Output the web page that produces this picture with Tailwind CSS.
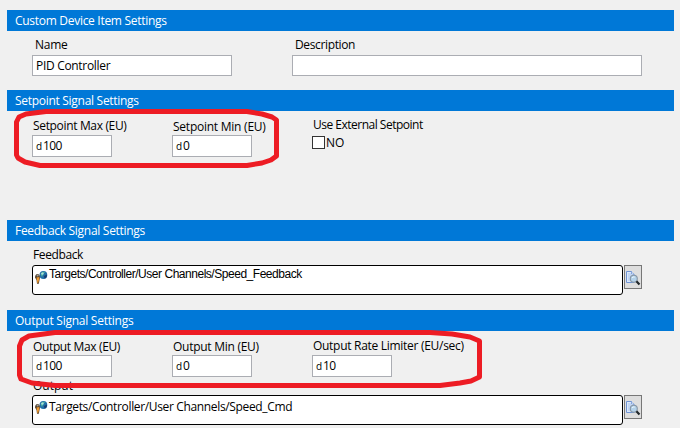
<!DOCTYPE html>
<html lang="en">
<head>
<meta charset="utf-8">
<title>PID Controller</title>
<script src="https://cdn.jsdelivr.net/npm/@tailwindcss/browser@4"></script>
</head>
<body class="relative h-[428px] w-[680px] overflow-hidden bg-[#f0f0f0] font-['Open_Sans','Noto_Sans',sans-serif] text-[12px] text-black">
<svg class="hidden">
  <symbol id="channel" viewBox="0 0 13 14">
    <circle cx="8.4" cy="4" r="3.9" fill="#206fa8"/>
    <path d="M5.5 3Q7.500 0 10 1L8.500 3 7 6Z" fill="#4fb39c"/>
    <path d="M9 5L12 3.500Q12 7 9.500 7.600Z" fill="#153b72"/>
    <circle cx="7.400" cy="2.600" r="1.200" fill="#a8e0dc"/>
    <path d="M0 6.500Q.2 3 2.500 3T5 6.500L4.500 9 3.800 12.800H2L1.500 9Z" fill="#54422f"/>
    <path d="M1.500 6.500L4.300 6 4 9 3.200 12H2.400Z" fill="#f09a30"/>
    <circle cx="2.600" cy="4.500" r="1" fill="#a5a5a0"/>
  </symbol>
  <symbol id="browse" viewBox="0 0 16 20">
    <path d="M1.500 5.500H6.500L9 8V16.500H1.500Z" fill="#dce9fb" stroke="#7094d4"/>
    <path d="M3 8H6M3 10H7M3 12H6M3 14H7" stroke="#a9c5ee"/>
    <path d="M6.500 5.500V8H9" fill="#fff" stroke="#7094d4" stroke-width=".8"/>
    <circle cx="8.800" cy="12.800" r="3.500" fill="#b4d2ea" stroke="#8796a5" stroke-width="1.100"/>
    <path d="M7 12Q8 10.500 9.700 11.100" fill="none" stroke="#effaff"/>
    <path d="M11.400 15.300L14.500 18.500" stroke="#20262a" stroke-width="2.200"/>
  </symbol>
</svg>
<main class="flex w-[674px] flex-col pt-[10px] pl-[7px]">
  <section class="h-[80px]">
    <h2 class="flex h-[21px] items-center bg-[#0078d7] pl-[8px] tracking-[-0.29px] text-white"><span>Custom Device Item Settings</span></h2>
    <div class="flex gap-[60px] pl-[25px]">
      <label class="flex w-[200px] flex-col"><span class="h-[24px] pl-[3px] leading-[28px] tracking-[-0.25px]">Name</span>
        <span class="flex h-[21px] items-center border border-[#abadb3] bg-white pl-[3px]"><span class="tracking-[-0.31px]">PID Controller</span></span></label>
      <label class="flex w-[350px] flex-col"><span class="h-[24px] pl-[3px] leading-[28px]"><span class="tracking-[-0.36px]">Description</span></span>
        <span class="h-[21px] border border-[#abadb3] bg-white"></span></label>
    </div>
  </section>
  <section class="h-[130px]">
    <h2 class="flex h-[21px] items-center bg-[#0078d7] pl-[8px] tracking-[-0.29px] text-white"><span>Setpoint Signal Settings</span></h2>
    <div class="flex pl-[25px]">
      <label class="flex w-[140px] flex-col"><span class="h-[24px] pl-[1px] leading-[29px]"><span class="tracking-[-0.34px]">Setpoint Max (EU)</span></span>
        <span class="flex h-[22px] w-[80px] items-center border border-[#abadb3] bg-white pl-[3px]"><span class="w-[7px] text-[10px]">d</span><span class="tracking-[-0.65px]">100</span></span></label>
      <label class="flex w-[140px] flex-col"><span class="h-[24px] pl-[1px] leading-[31px]"><span class="tracking-[-0.24px]">Setpoint Min (EU)</span></span>
        <span class="flex h-[22px] w-[80px] items-center border border-[#abadb3] bg-white pl-[3px]"><span class="w-[7px] text-[10px]">d</span><span>0</span></span></label>
      <div class="flex flex-col"><span class="h-[24px] pl-[1px] leading-[28px]"><span class="tracking-[-0.5px]">Use External Setpoint</span></span>
        <label class="flex h-[15px] items-center gap-[1px]"><span class="h-[13px] w-[13px] border border-[#333] bg-white"></span><span>NO</span></label></div>
    </div>
  </section>
  <section class="h-[90px]">
    <h2 class="flex h-[21px] items-center bg-[#0078d7] pl-[8px] tracking-[-0.29px] text-white"><span>Feedback Signal Settings</span></h2>
    <div class="h-[24px] pl-[26px] leading-[28px] tracking-[-0.38px]"><span>Feedback</span></div>
    <div class="flex items-start gap-px pl-[25px]">
      <div class="flex h-[30px] w-[591px] items-start rounded-[3px] border border-black bg-white pl-[2px]"><svg class="mt-[5px] mr-[1px] h-[14px] w-[13px] shrink-0"><use href="#channel"/></svg><span class="font-['Liberation_Sans',sans-serif] leading-[17px] tracking-[-0.47px]">Targets/Controller/User Channels/Speed_Feedback</span></div>
      <button class="flex h-[24px] w-[18px] items-start border border-[#777] bg-[#dedede] p-0"><svg class="h-[20px] w-[16px]"><use href="#browse"/></svg></button>
    </div>
  </section>
  <section class="h-[118px]">
    <h2 class="flex h-[21px] items-center bg-[#0078d7] pl-[8px] tracking-[-0.25px] text-white"><span>Output Signal Settings</span></h2>
    <div class="flex h-[46px] pl-[25px]">
      <label class="flex w-[140px] flex-col"><span class="h-[24px] pl-[1px] leading-[31px]"><span class="tracking-[-0.36px]">Output Max (EU)</span></span>
        <span class="flex h-[22px] w-[80px] items-center border border-[#abadb3] bg-white pl-[3px]"><span class="w-[7px] text-[10px]">d</span><span class="tracking-[-0.65px]">100</span></span></label>
      <label class="flex w-[140px] flex-col"><span class="h-[24px] pl-[1px] leading-[31px]"><span class="tracking-[-0.27px]">Output Min (EU)</span></span>
        <span class="flex h-[22px] w-[80px] items-center border border-[#abadb3] bg-white pl-[3px]"><span class="w-[7px] text-[10px]">d</span><span>0</span></span></label>
      <label class="flex w-[180px] flex-col"><span class="h-[24px] pl-[1px] leading-[29px]"><span class="tracking-[-0.29px]">Output Rate Limiter (EU/sec)</span></span>
        <span class="flex h-[22px] w-[80px] items-center border border-[#abadb3] bg-white pl-[3px]"><span class="w-[7px] text-[10px]">d</span><span class="tracking-[-0.65px]">10</span></span></label>
    </div>
    <div class="h-[18px] pl-[26px] leading-[17px]"><span>Output</span></div>
    <div class="flex items-start gap-px pl-[25px]">
      <div class="flex h-[30px] w-[591px] items-start rounded-[3px] border border-black bg-white pl-[2px]"><svg class="mt-[5px] mr-[1px] h-[14px] w-[13px] shrink-0"><use href="#channel"/></svg><span class="leading-[22px] tracking-[-0.35px]">Targets/Controller/User Channels/Speed_Cmd</span></div>
      <button class="flex h-[24px] w-[18px] items-start border border-[#777] bg-[#dedede] p-0"><svg class="h-[20px] w-[16px]"><use href="#browse"/></svg></button>
    </div>
  </section>
</main>
<!-- Marker outlines over the limit fields -->
<svg class="pointer-events-none absolute inset-0 h-[428px] w-[680px]" fill="none" stroke="#ed1c24" stroke-width="5" stroke-linejoin="round">
  <path d="M46 111.500H247L262 114 272 117 276.500 120V156L271 160 262 163 247 165.500H40L25 162 18 158 16.500 155V122L19 117 26 114Z"/>
  <path d="M55 332.500H430L452 334 470 337 479.500 341V377L471 381 460 383 440 385.500H55L32 383 21 379 19.500 375V346L22 340 29 336Z"/>
</svg>
</body>
</html>
